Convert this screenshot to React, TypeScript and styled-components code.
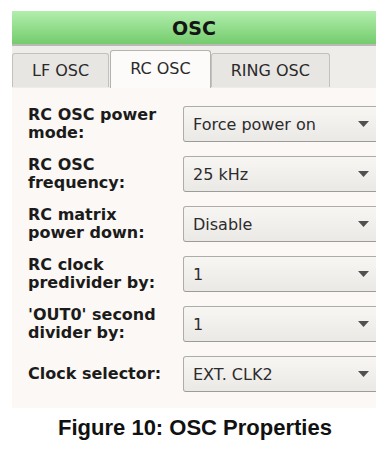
import React from "react";
import styled, { createGlobalStyle } from "styled-components";

const Global = createGlobalStyle`
  html, body { margin: 0; padding: 0; background: #ffffff; }
  body { font-family: "DejaVu Sans", sans-serif; }
`;

const Page = styled.div`
  width: 391px;
  padding-top: 11px;
  display: flex;
  flex-direction: column;
  align-items: flex-start;
`;

const Panel = styled.div`
  margin-left: 12px;
  width: 364px;
  overflow: hidden;
  display: flex;
  flex-direction: column;
`;

const Header = styled.div`
  height: 33px;
  display: flex;
  align-items: center;
  justify-content: center;
  background: linear-gradient(#b2eead, #74cc6d);
  border-bottom: 2px solid #b9b9b5;
  font-weight: bold;
  font-size: 19px;
  color: #151515;
`;

const TabBar = styled.div`
  height: 42px;
  display: flex;
  align-items: flex-end;
  background: #efedea;
`;

const Tab = styled.div<{ $active?: boolean }>`
  box-sizing: border-box;
  height: ${(p) => (p.$active ? "38px" : "34px")};
  margin-bottom: ${(p) => (p.$active ? "0" : "1px")};
  padding: 0 19px ${(p) => (p.$active ? "3px" : "0")};
  display: flex;
  align-items: center;
  font-size: 16px;
  color: #2a2a2a;
  background: ${(p) => (p.$active ? "#fdfbf9" : "#e8e6e3")};
  border: 1px solid ${(p) => (p.$active ? "#b5b3af" : "#c3c1bd")};
  border-bottom: none;
  border-radius: 3px 3px 0 0;
  margin-right: ${(p) => (p.$active ? "0" : "1px")};
`;

const Content = styled.div`
  background: #fbf8f5;
  padding: 18px 0 16px 16px;
  display: flex;
  flex-direction: column;
  gap: 14px;
`;

const Row = styled.div`
  display: grid;
  grid-template-columns: 155px 1fr;
  align-items: center;
`;

const Label = styled.div`
  font-weight: bold;
  font-size: 16px;
  line-height: 18px;
  color: #1b1b1b;
`;

const Select = styled.div`
  box-sizing: border-box;
  height: 36px;
  margin-right: -6px;
  display: flex;
  align-items: center;
  justify-content: space-between;
  padding: 0 12px 0 9px;
  border: 1px solid #aeaca8;
  border-bottom-color: #9e9c98;
  border-radius: 3px;
  background: linear-gradient(#f8f6f3, #ebe9e6);
  font-size: 16px;
  color: #2c2c2c;
`;

const Arrow = styled.svg`
  width: 11px;
  height: 6px;
  flex: none;
`;

const Caption = styled.div`
  align-self: stretch;
  margin-left: -1px;
  margin-top: 7px;
  text-align: center;
  font-family: "Liberation Sans", Arial, sans-serif;
  font-weight: bold;
  font-size: 22px;
  color: #111;
`;

const rows: [string[], string][] = [
  [["RC OSC power", "mode:"], "Force power on"],
  [["RC OSC", "frequency:"], "25 kHz"],
  [["RC matrix", "power down:"], "Disable"],
  [["RC clock", "predivider by:"], "1"],
  [["'OUT0' second", "divider by:"], "1"],
  [["Clock selector:"], "EXT. CLK2"],
];

export default function App() {
  return (
    <>
      <Global />
      <Page>
        <Panel>
          <Header>OSC</Header>
          <TabBar>
            <Tab>LF OSC</Tab>
            <Tab $active>RC OSC</Tab>
            <Tab>RING OSC</Tab>
          </TabBar>
          <Content>
            {rows.map(([label, value], i) => (
              <Row key={i}>
                <Label>
                  {label.map((l, j) => (
                    <div key={j}>{l}</div>
                  ))}
                </Label>
                <Select>
                  <span>{value}</span>
                  <Arrow viewBox="0 0 11 6">
                    <path d="M0 0 H11 L5.5 6 Z" fill="#505050" />
                  </Arrow>
                </Select>
              </Row>
            ))}
          </Content>
        </Panel>
        <Caption>Figure 10: OSC Properties</Caption>
      </Page>
    </>
  );
}
